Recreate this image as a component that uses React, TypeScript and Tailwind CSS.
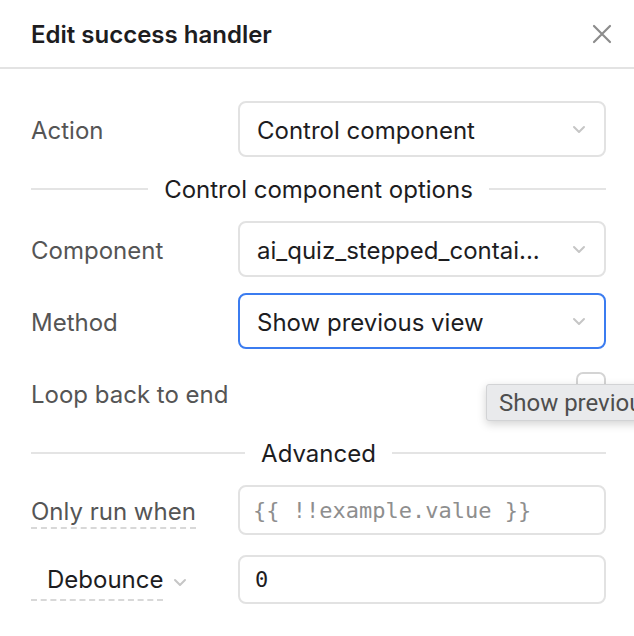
import React from "react";

const Chevron = () => (
  <svg width="14" height="9" viewBox="0 0 14 9" fill="none">
    <path d="M2 2l5 5 5-5" stroke="#c6c6c6" strokeWidth="2" strokeLinecap="round" strokeLinejoin="round" />
  </svg>
);

const Select = ({ value, active }: { value: string; active?: boolean }) => (
  <div
    className={
      active
        ? "h-[56px] rounded-[8px] border-2 border-[#3b7cf0] flex items-center justify-between pl-[17px] pr-[18px] bg-white"
        : "h-[56px] rounded-[8px] border-2 border-[#e2e2e2] flex items-center justify-between pl-[17px] pr-[18px] bg-white"
    }
  >
    <span className="text-[24px] text-[#1d1d1f] truncate pt-[3px]">{value}</span>
    <Chevron />
  </div>
);

const Divider = ({ label }: { label: string }) => (
  <div className="h-[64px] flex items-center gap-[16px]">
    <div className="flex-1 h-[2px] bg-[#e4e4e4]" />
    <span className="text-[24px] text-[#1d1d1f] pt-[2px]">{label}</span>
    <div className="flex-1 h-[2px] bg-[#e4e4e4]" />
  </div>
);

export default function App() {
  return (
    <div className="w-[634px] h-[636px] bg-white relative overflow-hidden font-['Inter',sans-serif]">
      <div className="h-[69px] border-b-2 border-[#e3e3e3] flex items-center justify-between pl-[31px] pr-[21px]">
        <span className="text-[24px] font-semibold text-[#1d1d1f] pt-[2px]">Edit success handler</span>
        <svg width="22" height="22" viewBox="0 0 22 22" fill="none">
          <path d="M3 3l16 16M19 3L3 19" stroke="#8c8c8c" strokeWidth="2.2" strokeLinecap="round" />
        </svg>
      </div>

      <div className="pl-[31px] pr-[28px] pt-[32px] flex flex-col">
        <div className="grid grid-cols-[207px_1fr] items-center">
          <span className="text-[24px] text-[#555555] pt-[4px]">Action</span>
          <Select value="Control component" />
        </div>

        <Divider label="Control component options" />

        <div className="flex flex-col gap-[16px]">
          <div className="grid grid-cols-[207px_1fr] items-center">
            <span className="text-[24px] text-[#555555] pt-[4px]">Component</span>
            <Select value="ai_quiz_stepped_contai..." />
          </div>
          <div className="grid grid-cols-[207px_1fr] items-center">
            <span className="text-[24px] text-[#555555] pt-[4px]">Method</span>
            <Select value="Show previous view" active />
          </div>
          <div className="h-[56px] flex items-center justify-between">
            <span className="text-[24px] text-[#555555] pt-[4px]">Loop back to end</span>
            <div className="w-[30px] h-[30px] rounded-[7px] border-2 border-[#d4d4d4] bg-white -mt-[12px]" />
          </div>
        </div>

        <Divider label="Advanced" />

        <div className="flex flex-col gap-[20px]">
          <div className="grid grid-cols-[207px_1fr] items-center">
            <div className="pt-[4px]">
              <span className="text-[24px] text-[#555555] border-b-2 border-dashed border-[#d8d8d8] pb-[1px]">Only run when</span>
            </div>
            <div className="h-[50px] rounded-[8px] border-2 border-[#e2e2e2] flex items-center pl-[13px]">
              <span className="text-[22px] text-[#8e8e8e] font-['DejaVu_Sans_Mono',monospace]">{"{{ !!example.value }}"}</span>
            </div>
          </div>
          <div className="grid grid-cols-[207px_1fr] items-center">
            <div className="flex items-center pt-[4px]">
              <span className="text-[24px] text-[#1d1d1f] border-b-2 border-dashed border-[#d8d8d8] pl-[16px] pb-[1px]">Debounce</span>
              <span className="ml-[10px] mt-[2px]"><Chevron /></span>
            </div>
            <div className="h-[49px] rounded-[8px] border-2 border-[#e2e2e2] flex items-center pl-[15px]">
              <span className="text-[22px] text-[#1d1d1f] font-['DejaVu_Sans_Mono',monospace]">0</span>
            </div>
          </div>
        </div>
      </div>

      <div className="absolute left-[486px] top-[384px] h-[37px] w-[200px] bg-[#e9eaec] border border-[#d2d3d5] rounded-[3px] shadow-[0_3px_10px_rgba(0,0,0,0.18)] flex items-center pl-[12px]">
        <span className="text-[24px] text-[#4e4e4e] whitespace-nowrap font-['Roboto',sans-serif]">Show previous view</span>
      </div>
    </div>
  );
}
